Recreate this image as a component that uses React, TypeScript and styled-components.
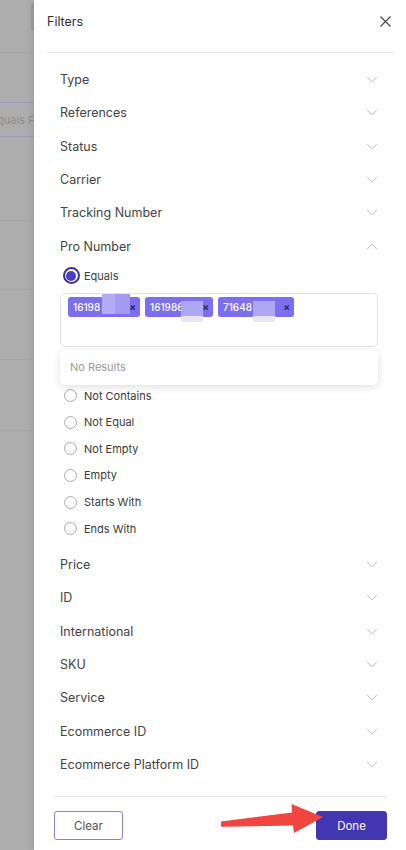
import React from "react";
import styled, { createGlobalStyle } from "styled-components";

const Global = createGlobalStyle`
  html, body { margin: 0; padding: 0; }
  body { font-family: Inter, "Noto Sans", Arial, sans-serif; background: #adadad; }
  * { box-sizing: border-box; }
`;

const Page = styled.div`
  display: flex;
  width: 406px;
  height: 850px;
  overflow: hidden;
`;

const Backdrop = styled.div`
  width: 34px;
  flex-shrink: 0;
  background: #adadad;
  display: flex;
  flex-direction: column;
  overflow: hidden;
`;

const BgButton = styled.div`
  margin: 3px 0 0 31px;
  width: 20px;
  height: 28px;
  border-radius: 4px;
  background: #9d9da8;
  flex-shrink: 0;
`;

const BgRule = styled.div<{ $gap: number }>`
  margin-top: ${(p) => p.$gap}px;
  height: 1px;
  background: #a4a4a4;
  flex-shrink: 0;
`;

const BgInput = styled.div`
  margin-top: 49px;
  height: 35px;
  border-top: 1px solid #9a98b4;
  border-bottom: 1px solid #9a98b4;
  display: flex;
  align-items: center;
  font-size: 11px;
  color: #8e8e8e;
  white-space: nowrap;
  text-indent: -3px;
  flex-shrink: 0;
`;

const Panel = styled.div`
  flex: 1;
  background: #fff;
  display: flex;
  flex-direction: column;
  box-shadow: -3px 0 6px rgba(0, 0, 0, 0.08);
  position: relative;
`;

const Header = styled.div`
  height: 42px;
  margin-bottom: 10px;
  padding: 0 15px 0 13px;
  display: flex;
  align-items: center;
  justify-content: space-between;
`;

const Title = styled.div`
  font-size: 12.5px;
  color: #2e2e2e;
`;

const Divider = styled.div<{ $l: number; $r: number }>`
  height: 1px;
  background: #e6e6e6;
  margin: 0 ${(p) => p.$r}px 0 ${(p) => p.$l}px;
`;

const Body = styled.div`
  flex: 1;
  padding: 10px 28px 0 26px;
  display: flex;
  flex-direction: column;
`;

const Row = styled.div`
  height: 33.3px;
  display: flex;
  align-items: center;
  justify-content: space-between;
  font-size: 12.5px;
  color: #444;
  flex-shrink: 0;
`;

const Options = styled.div`
  display: flex;
  flex-direction: column;
  position: relative;
  padding-top: 4px;
  margin-bottom: 6px;
`;

const OptionRow = styled.div<{ $h: number; $hidden?: boolean }>`
  height: ${(p) => p.$h}px;
  display: flex;
  align-items: center;
  font-size: 11px;
  color: #3a3a3a;
  visibility: ${(p) => (p.$hidden ? "hidden" : "visible")};
`;

const RadioSlot = styled.div`
  width: 24px;
  display: flex;
  justify-content: center;
  padding-right: 4px;
`;

const RadioOff = styled.span`
  width: 13px;
  height: 13px;
  border-radius: 50%;
  border: 1px solid #a9a9a9;
  background: #fff;
`;

const RadioOn = styled.span`
  width: 17px;
  height: 17px;
  border-radius: 50%;
  border: 2px solid #3b3299;
  padding: 1.5px;
  display: flex;
  margin-left: 2px;
  &::after {
    content: "";
    flex: 1;
    border-radius: 50%;
    background: #4a3fc4;
  }
`;

const InputBox = styled.div`
  margin: 8px 0 9px;
  height: 54px;
  border: 1px solid #e3e3e3;
  border-radius: 5px;
  padding: 3px 7px;
  display: flex;
  align-items: flex-start;
  gap: 5px;
`;

const Pill = styled.div<{ $w: number }>`
  position: relative;
  width: ${(p) => p.$w}px;
  height: 20px;
  border-radius: 3px;
  background: #7b6ef0;
  color: #fff;
  font-size: 10px;
  font-weight: 500;
  display: flex;
  align-items: center;
  padding: 0 4px 0 5px;
  justify-content: space-between;
`;

const PillX = styled.span`
  color: #2b2660;
  font-size: 10px;
  font-weight: 700;
`;

const Blur = styled.span<{ $l: number; $w: number; $low: boolean }>`
  position: absolute;
  left: ${(p) => p.$l}px;
  top: ${(p) => (p.$low ? 4 : -3)}px;
  width: ${(p) => p.$w}px;
  height: ${(p) => (p.$low ? 21 : 20)}px;
  background: ${(p) =>
    p.$low
      ? "linear-gradient(#aea7f4 0 70%, #e6e3fb 70% 100%)"
      : "linear-gradient(90deg, #b3acf5 0 45%, #a39bf1 45% 100%)"};
`;

const Dropdown = styled.div`
  position: absolute;
  left: 0;
  right: 0;
  top: 87px;
  height: 35px;
  background: #fff;
  border-radius: 5px;
  box-shadow: 0 2px 8px rgba(0, 0, 0, 0.13);
  display: flex;
  align-items: center;
  padding-left: 10px;
  font-size: 11px;
  color: #9a9a9a;
`;

const Footer = styled.div`
  position: relative;
  padding: 0 19px 10px 20px;
`;

const Buttons = styled.div`
  display: flex;
  justify-content: space-between;
  margin-top: 14px;
`;

const Btn = styled.button<{ $primary?: boolean }>`
  height: 29px;
  width: ${(p) => (p.$primary ? 71 : 69)}px;
  border-radius: 3px;
  font-family: inherit;
  font-size: 11.5px;
  border: 1px solid ${(p) => (p.$primary ? "#4336b2" : "#8a80cf")};
  background: ${(p) => (p.$primary ? "#4336b2" : "#fff")};
  color: ${(p) => (p.$primary ? "#fff" : "#555")};
  padding: 0;
`;

const Arrow = styled.svg`
  position: absolute;
  left: 184px;
  top: 5px;
`;

const Chevron = ({ up }: { up?: boolean }) => (
  <svg width="12" height="7" viewBox="0 0 12 7" fill="none">
    <path
      d={up ? "M1 6.2L6 1.2L11 6.2" : "M1 0.8L6 5.8L11 0.8"}
      stroke="#b9b9b9"
      strokeWidth="1"
    />
  </svg>
);

const CloseIcon = () => (
  <svg width="11" height="11" viewBox="0 0 11 11">
    <path d="M0.5 0.5L10.5 10.5M10.5 0.5L0.5 10.5" stroke="#444" strokeWidth="1.1" />
  </svg>
);

const topRows = ["Type", "References", "Status", "Carrier", "Tracking Number"];
const bottomRows = [
  "Price",
  "ID",
  "International",
  "SKU",
  "Service",
  "Ecommerce ID",
  "Ecommerce Platform ID",
];
const options = ["Not Contains", "Not Equal", "Not Empty", "Empty", "Starts With", "Ends With"];

const pills = [
  { text: "16198", w: 72, bl: 34, bw: 28, low: false },
  { text: "161986", w: 68, bl: 36, bw: 22, low: true },
  { text: "71648", w: 76, bl: 35, bw: 22, low: true },
];

export default function App() {
  return (
    <Page>
      <Global />
      <Backdrop>
        <BgButton />
        <BgRule $gap={21} />
        <BgInput>quals From</BgInput>
        <BgRule $gap={83} />
        <BgRule $gap={68} />
        <BgRule $gap={69} />
        <BgRule $gap={70} />
      </Backdrop>
      <Panel>
        <Header>
          <Title>Filters</Title>
          <CloseIcon />
        </Header>
        <Divider $l={13} $r={12} />
        <Body>
          {topRows.map((r) => (
            <Row key={r}>
              {r}
              <Chevron />
            </Row>
          ))}
          <Row>
            Pro Number
            <Chevron up />
          </Row>
          <Options>
            <OptionRow $h={18}>
              <RadioSlot>
                <RadioOn />
              </RadioSlot>
              Equals
            </OptionRow>
            <InputBox>
              {pills.map((p, i) => (
                <Pill key={i} $w={p.w}>
                  {p.text}
                  <PillX>×</PillX>
                  <Blur $l={p.bl} $w={p.bw} $low={p.low} />
                </Pill>
              ))}
            </InputBox>
            <OptionRow $h={26.6} $hidden>
              <RadioSlot>
                <RadioOff />
              </RadioSlot>
            </OptionRow>
            {options.map((o) => (
              <OptionRow key={o} $h={26.6}>
                <RadioSlot>
                  <RadioOff />
                </RadioSlot>
                {o}
              </OptionRow>
            ))}
            <Dropdown>No Results</Dropdown>
          </Options>
          {bottomRows.map((r) => (
            <Row key={r}>
              {r}
              <Chevron />
            </Row>
          ))}
        </Body>
        <Footer>
          <Divider $l={0} $r={0} />
          <Buttons>
            <Btn>Clear</Btn>
            <Btn $primary>Done</Btn>
          </Buttons>
          <Arrow width="108" height="36" viewBox="0 0 108 36">
            <polygon
              points="3,20.5 74,11.5 73.5,3 105,16 76,32 75,24.5 3,25.8"
              fill="#f0463f"
            />
          </Arrow>
        </Footer>
      </Panel>
    </Page>
  );
}
